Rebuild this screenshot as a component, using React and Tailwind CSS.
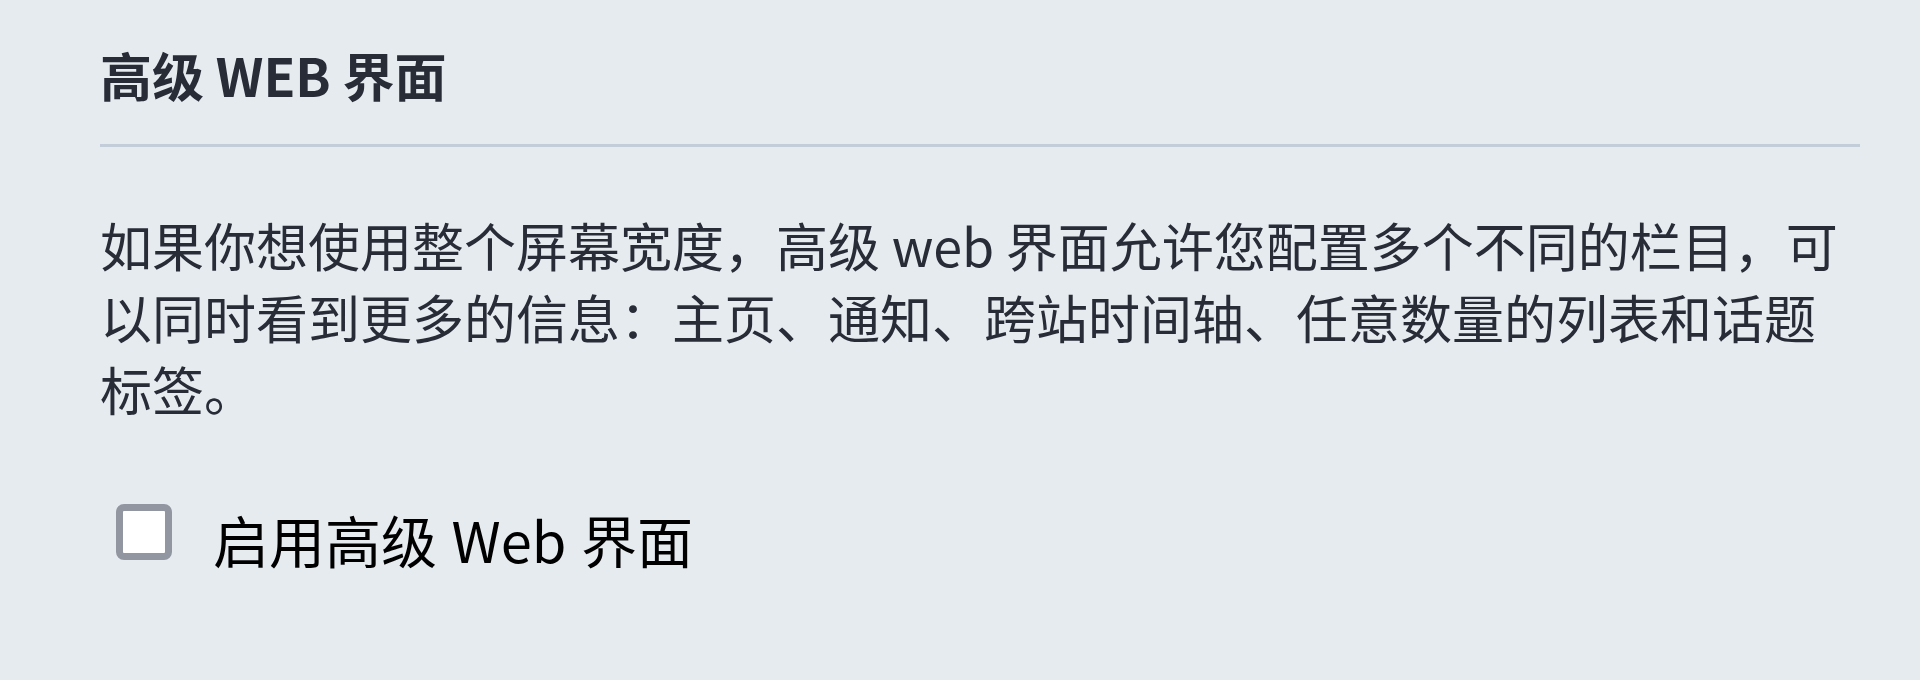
import { useState } from "react";

// page font: CJK face first so line boxes come from one font
const font = { fontFamily: '"Noto Sans CJK SC", "Noto Sans", sans-serif' };

export default function App() {
    const [advanced, setAdvanced] = useState(false);

    return (
        <div className="min-h-screen bg-[#e6ebf0] pl-[100px] pr-[60px] pt-[39px]" style={font}>
            {/* section heading */}
            <h2 className="text-[52px] leading-[72px] font-bold text-[#282c37] pb-[33px] border-b-[3px] border-[#c3cdd9]">
                高级 WEB 界面
            </h2>

            {/* hint */}
            <p className="mt-[62px] text-[52px] leading-[72px] text-[#282c37]">
                如果你想使用整个屏幕宽度，高级 web 界面允许您配置多个不同的栏目，可以同时看到更多的信息：主页、通知、跨站时间轴、任意数量的列表和话题标签。
            </p>

            {/* checkbox row */}
            <label className="mt-[80px] flex items-start cursor-pointer">
                <input
                    type="checkbox"
                    checked={advanced}
                    onChange={(e) => setAdvanced(e.target.checked)}
                    className="sr-only"
                />
                <span className="ml-[16px] mt-[-1px] w-[56px] h-[56px] shrink-0 rounded-[8px] border-[7px] border-[#9196a1] bg-white"></span>
                <span className="ml-[41px] text-[56px] leading-[68px] text-black [word-spacing:2px]">
                    启用高级 Web 界面
                </span>
            </label>
        </div>
    );
}
